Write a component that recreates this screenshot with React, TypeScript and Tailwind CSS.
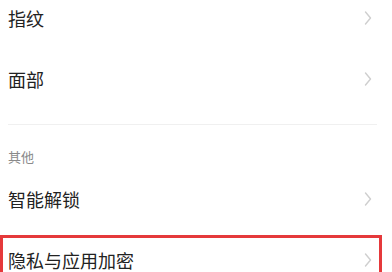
import React from 'react';

const Chevron = () => (
  <svg width="8" height="14" viewBox="0 0 8 14" className="mr-[20px] shrink-0">
    <polyline points="1.5,1 6.5,7 1.5,13" fill="none" stroke="#cfcfcf" strokeWidth="1.4" strokeLinecap="round" strokeLinejoin="round" />
  </svg>
);

function Row({ label, highlight }: { label: string; highlight?: boolean }) {
  return (
    <div className="relative flex h-[61px] items-center justify-between pl-[8px]">
      <span className="text-[18px] leading-none text-[#222]">{label}</span>
      <Chevron />
      {highlight && (
        <div className="pointer-events-none absolute left-[0px] right-[10px] top-[6px] -bottom-[10px] border-[3px] border-[#e5393b]" />
      )}
    </div>
  );
}

export default function App() {
  return (
    <div
      className="h-[272px] w-[392px] overflow-hidden bg-white"
      style={{ fontFamily: '"Noto Sans CJK SC", "Noto Sans", sans-serif' }}
    >
      <div className="-mt-[13px]">
        <Row label="指纹" />
        <Row label="面部" />
        <div className="mx-[8px] mr-[15px] mt-[15px] h-px bg-[#f0f0f0]" />
        <div className="px-[8px] pt-[25px] pb-[5px] text-[13px] leading-[13px] text-[#8a8a8a]">其他</div>
        <Row label="智能解锁" />
        <Row label="隐私与应用加密" highlight />
      </div>
    </div>
  );
}
